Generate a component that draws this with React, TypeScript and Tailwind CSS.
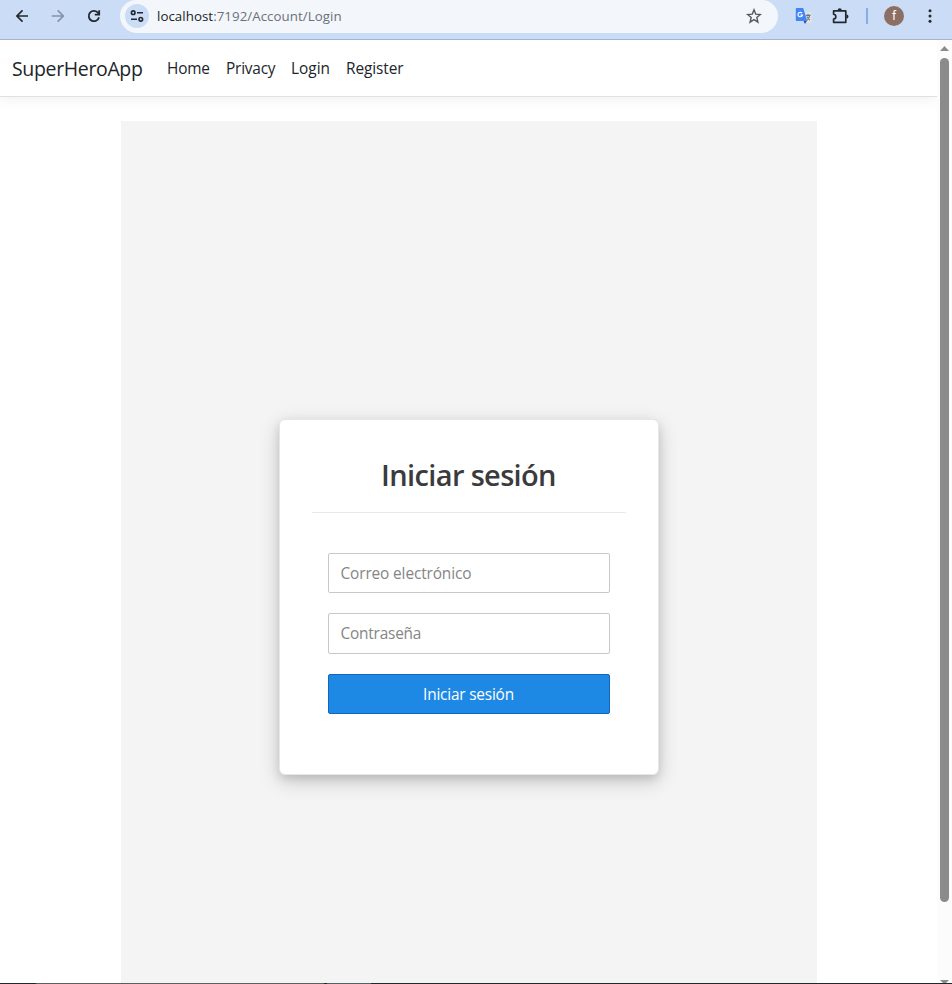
import React from "react";

const ink = "#23272e";

function BrowserBar() {
  return (
    <header className="flex h-10 shrink-0 items-start border-b border-[#a3b4d3] bg-[#cbdcf6]">
      <div className="flex h-8 w-[120px] items-center">
        <svg className="ml-[15px] h-4 w-4 shrink-0" viewBox="0 0 16 16" fill="none" stroke={ink} strokeWidth="1.7">
          <path d="M13 8H2.2M7.5 2.4 1.9 8l5.6 5.6" />
        </svg>
        <svg className="ml-5 h-4 w-4 shrink-0" viewBox="0 0 16 16" fill="none" stroke="#8593aa" strokeWidth="1.7">
          <path d="M.8 8h11M6.7 2.4 12.3 8l-5.6 5.6" />
        </svg>
        <svg className="ml-[19px] h-4 w-4 shrink-0" viewBox="0 0 16 16" fill="none" stroke={ink} strokeWidth="1.8">
          <path d="M13 9.2A5.2 5.2 0 1 1 12.2 5L13 6.1" />
          <path d="M13.2 2.2v4.4H8.8" />
        </svg>
      </div>
      <div className="flex h-[33px] w-[658px] items-start rounded-t-[16px] rounded-b-[17px] bg-[#f3f7fc]">
        <div className="ml-[5px] mt-1 flex h-6 w-6 items-center justify-center rounded-full bg-[#cbdcf6]">
          <svg className="h-4 w-4" viewBox="0 0 16 16" fill="none" stroke={ink} strokeWidth="1.6">
            <circle cx="4.2" cy="4.7" r="1.8" />
            <path d="M8 4.7h6M2 11.3h6" />
            <circle cx="11.8" cy="11.3" r="1.8" />
          </svg>
        </div>
        <div className="ml-2 flex h-[33px] flex-1 items-center whitespace-nowrap pt-px text-[13.3px] tracking-[0.05px] text-[#6b7078]">
          <span className="text-[#202328]">localhost</span>:7192/Account/Login
        </div>
        <svg className="mr-4 mt-2 h-4 w-4" viewBox="0 0 16 16" fill="none" stroke="#555a62" strokeWidth="1.4">
          <path d="m8 1.8 1.7 4.3 4.6.4-3.5 3 1.1 4.6L8 11.6l-3.9 2.5 1.1-4.6-3.5-3 4.6-.4Z" />
        </svg>
      </div>
      <div className="flex h-8 flex-1 items-center">
        <svg className="ml-[17px] h-4 w-[17px] shrink-0" viewBox="0 0 17 16">
          <path d="M7 4.2h9.7V15H11Z" fill="#e2e2df" />
          <path d="M8 12h4.5L10 15.9Z" fill="#3949ab" />
          <path d="M1.6 0h6.6l4 13H1.6a.8.8 0 0 1-.8-.8V.8a.8.8 0 0 1 .8-.8Z" fill="#4285f4" />
          <path d="M7 5.2A2.2 2.2 0 1 0 7.4 7H5.4" fill="none" stroke="#fff" strokeWidth="1.2" />
          <path d="M10.8 7.4h4.8M13.1 6V7.4M11.8 8.6l3 3.6M14.7 7.6c-.4 1.8-1.3 3.2-2.6 4.3" fill="none" stroke="#607d8b" strokeWidth="1.1" />
        </svg>
        <svg className="ml-[19px] h-[18px] w-[18px] shrink-0" viewBox="0 0 18 18">
          <path d="M2.6 3.9h12.2v11.4H2.6v-3.1c3-.7 3-4.3 0-5Z" fill="none" stroke={ink} strokeWidth="1.7" strokeLinejoin="round" />
          <path d="M6.6 3.4a2.1 2.1 0 0 1 4.2 0ZM15.4 7.5a2.1 2.1 0 0 1 0 4.2Z" fill={ink} />
        </svg>
        <span className="ml-[17px] h-4 w-0.5 bg-[#83aeea]" />
        <span className="ml-4 flex h-5 w-5 items-center justify-center rounded-full bg-[#8d6e63] pb-px font-['Roboto',sans-serif] text-[12px] leading-none text-white">f</span>
        <svg className="ml-[18px] h-4 w-4 shrink-0" viewBox="0 0 16 16" fill={ink}>
          <circle cx="8" cy="2.7" r="1.5" />
          <circle cx="8" cy="8" r="1.5" />
          <circle cx="8" cy="13.3" r="1.5" />
        </svg>
      </div>
    </header>
  );
}

function Navbar() {
  return (
    <nav className="flex h-[57px] items-center whitespace-nowrap border-b border-[#dee2e6] bg-white pl-3 text-[#212529] shadow-[0_4px_12px_rgba(0,0,0,0.05)]">
      <a className="w-[155px] pt-px text-[19.5px] tracking-[-0.35px]">SuperHeroApp</a>
      <div className="flex pt-0.5 text-[15.4px] tracking-[-0.2px]">
        <a className="w-[59px]">Home</a>
        <a className="w-[65px]">Privacy</a>
        <a className="w-[55px] tracking-[0]">Login</a>
        <a className="tracking-[-0.08px]">Register</a>
      </div>
    </nav>
  );
}

function LoginCard() {
  return (
    <section className="h-[356px] w-[380px] rounded-md border border-[#e7e7e7] bg-white px-8 shadow-[0_6px_20px_rgba(0,0,0,0.19),0_4px_8px_rgba(0,0,0,0.1)]">
      <h1 className="flex h-[93px] items-center justify-center whitespace-nowrap border-b border-[#e9e9e9] pt-[18px] text-[29px] font-semibold tracking-[-0.65px] text-[#3b3b3d]">
        Iniciar sesión
      </h1>
      <form className="flex flex-col gap-5 px-4 pt-10 text-[15.4px] tracking-[-0.2px]">
        <input className="h-10 w-full rounded-[2px] border border-[#c8c8c8] pl-3 pr-[11px] tracking-[-0.12px] outline-none placeholder:text-[#858585]" placeholder="Correo electrónico" />
        <input className="h-[41px] w-full rounded-[2px] border border-[#c8c8c8] pl-3 pr-[11px] outline-none placeholder:text-[#858585]" type="password" placeholder="Contraseña" />
        <button type="button" className="h-10 w-full rounded-[2px] border border-[#1565c0] bg-[#1e88e5] pt-0.5 text-white">
          Iniciar sesión
        </button>
      </form>
    </section>
  );
}

function Scrollbar() {
  return (
    <div className="flex w-[15px] shrink-0 flex-col items-center bg-[#fcfcfc]">
      <svg className="mt-1.5 h-[5px] w-[9px]" viewBox="0 0 9 5" fill="#8b8b8b">
        <path d="M0 5 4.5 0 9 5Z" />
      </svg>
      <div className="mt-[7px] h-[844px] w-[9px] rounded-full bg-[#8b8b8b]" />
      <svg className="mt-[78px] h-[3px] w-[9px]" viewBox="0 0 9 3" fill="#8b8b8b">
        <path d="M0 0h9L6 3H3Z" />
      </svg>
    </div>
  );
}

export default function App() {
  return (
    <div className="flex h-[984px] w-[952px] flex-col overflow-hidden bg-white font-['Segoe_UI','Open_Sans',sans-serif]">
      <BrowserBar />
      <div className="flex h-[943px] shrink-0">
        <div className="flex min-w-0 flex-1 flex-col overflow-hidden">
          <Navbar />
          <main className="mx-auto mt-6 flex w-[696px] flex-1 justify-center bg-[#f4f4f4] pt-[298px]">
            <LoginCard />
          </main>
        </div>
        <Scrollbar />
      </div>
      <div className="flex h-px shrink-0 bg-[#20282c]">
        <span className="ml-9 w-[288px] bg-[#605d5e]" />
        <span className="ml-[3px] w-11 bg-[#536064]" />
      </div>
    </div>
  );
}
